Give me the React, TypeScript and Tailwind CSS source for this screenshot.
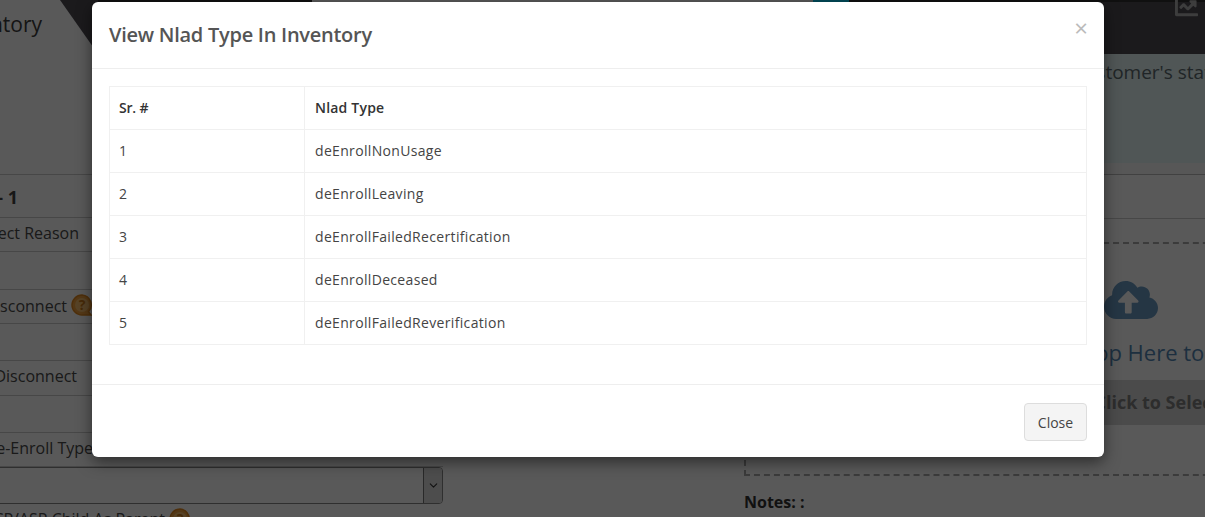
import { ChevronDown } from "lucide-react";
import { FaChartLine, FaCloudUploadAlt } from "react-icons/fa";

const nladTypes = [
  "deEnrollNonUsage",
  "deEnrollLeaving",
  "deEnrollFailedRecertification",
  "deEnrollDeceased",
  "deEnrollFailedReverification",
];

function HelpBubble() {
  return (
    <svg width="22" height="23" viewBox="0 0 22 23" className="shrink-0">
      <path d="M11 1a10 10 0 1 0 0 20h9l-2.5-3.2A10 10 0 0 0 11 1z" fill="#f0a040" stroke="#e08820" strokeWidth="1.5" />
      <circle cx="11" cy="11" r="7" fill="#f8c070" />
      <text x="11" y="16" textAnchor="middle" fontSize="14" fontWeight="700" fill="#c87818" fontFamily="Open Sans, sans-serif">
        ?
      </text>
    </svg>
  );
}

function Label({ end, children }: { end: string; children: React.ReactNode }) {
  return <div className={`flex items-center justify-end gap-1 whitespace-nowrap ${end}`}>{children}</div>;
}

export default function App() {
  return (
    <div className="relative h-[517px] w-[1205px] overflow-hidden bg-white font-['Open_Sans',sans-serif] text-[16px] text-[#4a4a4a]">
      {/* Page header */}
      <div className="flex h-[54px]">
        <div className="w-[60px] shrink-0 pt-[9px] text-[21px] text-[#3c3c3c]">
          <Label end="w-[42px]">Inventory</Label>
        </div>
        <div className="h-[54px] w-[38px] shrink-0 bg-[#4d4a52] [clip-path:polygon(0_0,100%_100%,100%_0)]" />
        <div className="relative flex-1 bg-[#4d4a52]">
          <div className="flex h-[2px]">
            <div className="w-[214px] bg-[#303030]" />
            <div className="w-[501px] bg-white" />
            <div className="w-[36px] bg-[#06d3fe]" />
            <div className="flex-1 bg-[#303030]" />
          </div>
          <FaChartLine className="absolute right-[7px] top-[-4px] text-[#b0b0b0]" size={23} />
        </div>
      </div>

      <div className="flex">
        {/* Form column */}
        <div className="flex w-[443px] shrink-0 flex-col">
          <div className="h-[121px] border-b border-[#ccc]" />
          <div className="flex h-[43px] items-center border-b border-[#ccc] pt-[3px] text-[18px] font-bold text-[#444]">
            <Label end="w-[18px]">Group - 1</Label>
          </div>
          <div className="flex h-[34px] items-center border-b border-[#ccc] pb-[3px]">
            <Label end="w-[79px]">Select Reason</Label>
          </div>
          <div className="h-[38px] border-b border-[#ccc]" />
          <div className="flex h-[34px] items-center border-b border-[#ccc] pb-[2px]">
            <Label end="w-[93px]">
              Disconnect <HelpBubble />
            </Label>
          </div>
          <div className="h-[37px] border-b border-[#ccc]" />
          <div className="flex h-[35px] items-center border-b border-[#ccc] pb-[4px]">
            <Label end="w-[77px]">Disconnect</Label>
          </div>
          <div className="h-[37px] border-b border-[#ccc]" />
          <div className="flex h-[34px] items-center border-b border-[#ccc] pb-[3px]">
            <Label end="w-[93px]">De-Enroll Type</Label>
          </div>
          <div className="-ml-[8px] flex h-[37px] justify-end rounded-[4px] border border-[#888]">
            <div className="flex w-[19px] items-center justify-center rounded-r-[3px] border-l border-[#777] bg-[#ddd]">
              <ChevronDown size={13} className="text-[#333]" />
            </div>
          </div>
          <div className="mt-[3px] flex">
            <Label end="w-[191px]">
              ACP/ASP Child As Parent <HelpBubble />
            </Label>
          </div>
        </div>

        {/* Upload column */}
        <div className="ml-[301px] flex w-[774px] shrink-0 flex-col">
          <div className="h-[109px] bg-[#e4f6f6] pl-[180px] pt-[4px] text-[19px] whitespace-nowrap text-[#5d6b70]">
            Please check the customer's status
          </div>
          <div className="h-[12px] border-b border-[#bbb] bg-[#f8f8f8]" />
          <div className="h-[44px] border-b border-[#ccc]" />
          <div className="mt-[23px] flex h-[234px] flex-col items-center border-2 border-dashed border-[#aaa] pt-[29px]">
            <FaCloudUploadAlt size={54} className="text-[#6b9cc4]" />
            <div className="mt-[7px] pl-[18px] text-[22px] leading-[36px] text-[#5388b5]">Drag &amp; Drop Here to Browse</div>
            <div className="mt-[10px] flex h-[45px] w-full items-center justify-center bg-[#d8d8d8] pl-[88px] text-[18px] font-bold text-[#808080]">
              Click to Select File
            </div>
          </div>
          <div className="mt-[14px] text-[16px] font-bold text-[#333]">Notes: :</div>
        </div>
      </div>

      {/* Modal backdrop */}
      <div className="absolute inset-0 bg-black/65" />

      {/* Modal */}
      <div className="absolute left-[92px] top-[2px] flex h-[455px] w-[1012px] flex-col rounded-[6px] bg-white shadow-[0_5px_15px_rgba(0,0,0,0.5)]">
        <div className="flex h-[67px] items-center justify-between border-b border-[#eee] px-[17px]">
          <h4 className="text-[20px] font-semibold tracking-[-0.26px] text-[#555]">View Nlad Type In Inventory</h4>
          <span className="-mr-[1px] -mt-[14px] text-[24px] leading-none font-normal text-[#bbb]">×</span>
        </div>
        <div className="h-[315px] px-[17px] pt-[17px]">
          <table className="w-full border-collapse text-[14px] tracking-[0.33px] text-[#444]">
            <thead>
              <tr className="h-[43px]">
                <th className="w-[195px] border border-[#f0f0f0] px-[9px] pb-[2px] text-left font-semibold tracking-[-0.2px] text-[#333]">Sr. #</th>
                <th className="border border-[#f0f0f0] pl-[10px] pr-[9px] pb-[2px] text-left font-semibold tracking-[0.2px] text-[#333]">Nlad Type</th>
              </tr>
            </thead>
            <tbody>
              {nladTypes.map((t, i) => (
                <tr key={t} className="h-[43px]">
                  <td className="border border-[#f0f0f0] px-[9px] pb-[2px]">{i + 1}</td>
                  <td className="border border-[#f0f0f0] pl-[10px] pr-[9px] pb-[2px]">{t}</td>
                </tr>
              ))}
            </tbody>
          </table>
        </div>
        <div className="flex flex-1 items-start justify-end border-t border-[#eee] px-[17px] pt-[18px]">
          <button className="h-[38px] w-[63px] rounded-[4px] border border-[#ddd] bg-[#f4f4f4] text-[14px] text-[#444]">Close</button>
        </div>
      </div>
    </div>
  );
}
